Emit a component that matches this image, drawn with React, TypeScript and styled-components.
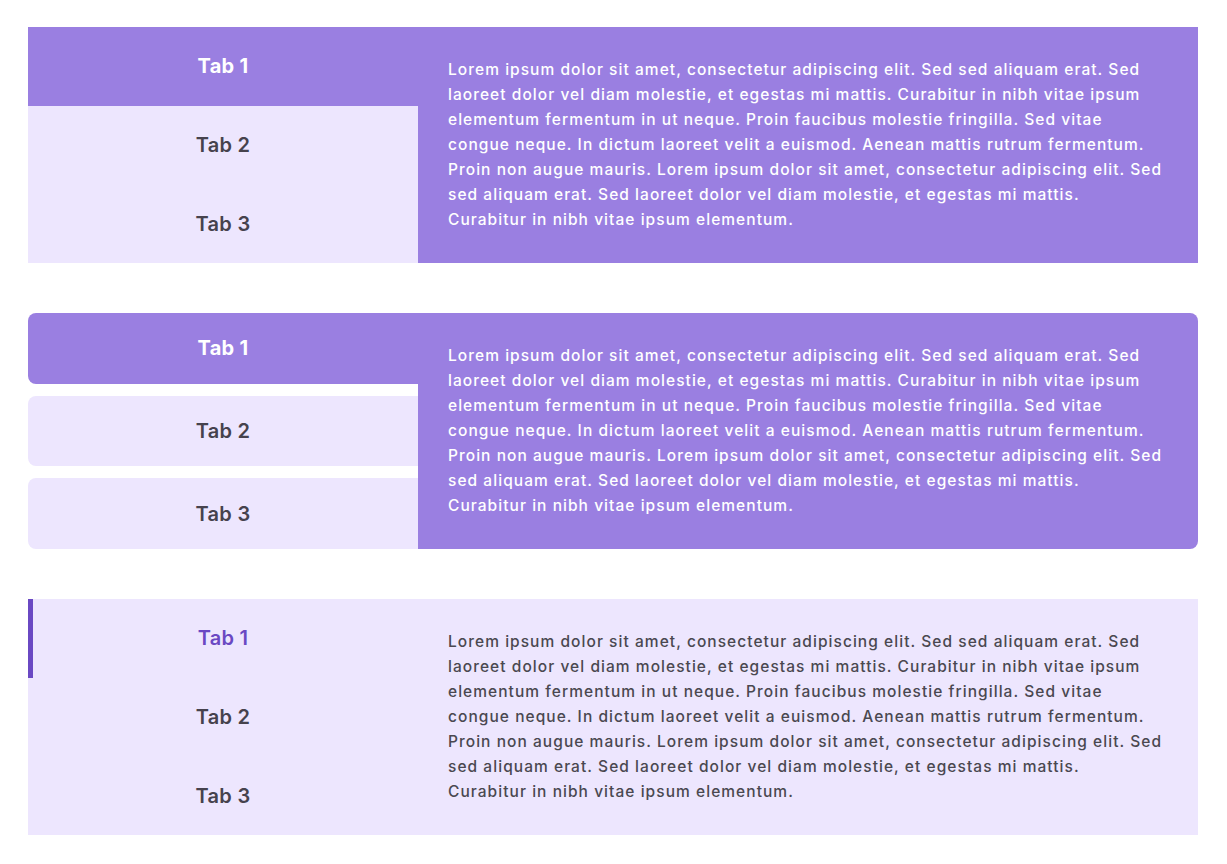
import React from "react";
import styled, { createGlobalStyle, css } from "styled-components";

const Global = createGlobalStyle`
  html, body { margin: 0; padding: 0; background: #ffffff; }
  body { font-family: Inter, "Noto Sans", sans-serif; }
  * { box-sizing: border-box; }
`;

const purple = "#9a7fe1";
const light = "#ede6fe";
const accent = "#6a48c3";

type Variant = "flat" | "rounded" | "line";

const Page = styled.div`
  width: 1170px;
  margin: 27px 0 0 28px;
  display: flex;
  flex-direction: column;
  gap: 50px;
`;

const TabsBox = styled.div<{ $v: Variant }>`
  display: grid;
  grid-template-columns: 390px 1fr;
  ${(p) => p.$v === "line" && css`background: ${light};`}
`;

const TabList = styled.div<{ $v: Variant }>`
  display: flex;
  flex-direction: column;
  gap: ${(p) => (p.$v === "rounded" ? "12px" : "0")};
`;

const Tab = styled.button<{ $v: Variant; $active: boolean }>`
  flex: 1;
  border: none;
  margin: 0;
  padding: 0;
  position: relative;
  font-family: Inter, "Noto Sans", sans-serif;
  font-size: 20px;
  letter-spacing: 0.3px;
  font-weight: 600;
  color: #46424d;
  background: ${light};
  cursor: pointer;
  ${(p) =>
    p.$v === "flat" &&
    p.$active &&
    css`
      background: ${purple};
      color: #ffffff;
      font-weight: 700;
    `}
  ${(p) =>
    p.$v === "rounded" &&
    css`
      border-radius: 8px 0 0 8px;
      ${p.$active && css`background: ${purple}; color: #ffffff; font-weight: 700;`}
    `}
  ${(p) =>
    p.$v === "line" &&
    css`
      background: transparent;
      ${p.$active &&
      css`
        color: ${accent};
        &::before {
          content: "";
          position: absolute;
          left: 0;
          top: 0;
          bottom: 0;
          width: 5px;
          background: ${accent};
        }
      `}
    `}
`;

const Panel = styled.div<{ $v: Variant }>`
  padding: 30px 35px 31px 30px;
  font-size: 15.5px;
  line-height: 25px;
  letter-spacing: 1.05px;
  font-weight: 500;
  color: #ffffff;
  background: ${purple};
  ${(p) => p.$v === "rounded" && css`border-radius: 0 8px 8px 0;`}
  ${(p) =>
    p.$v === "line" &&
    css`
      background: transparent;
      color: #4a4850;
    `}
`;

const Text = styled.p`
  margin: 0;
`;

const LOREM =
  "Lorem ipsum dolor sit amet, consectetur adipiscing elit. Sed sed aliquam erat. Sed laoreet dolor vel diam molestie, et egestas mi mattis. Curabitur in nibh vitae ipsum elementum fermentum in ut neque. Proin faucibus molestie fringilla. Sed vitae congue neque. In dictum laoreet velit a euismod. Aenean mattis rutrum fermentum. Proin non augue mauris. Lorem ipsum dolor sit amet, consectetur adipiscing elit. Sed sed aliquam erat. Sed laoreet dolor vel diam molestie, et egestas mi mattis. Curabitur in nibh vitae ipsum elementum.";

function Tabs({ v }: { v: Variant }) {
  return (
    <TabsBox $v={v}>
      <TabList $v={v}>
        {["Tab 1", "Tab 2", "Tab 3"].map((t, i) => (
          <Tab key={t} $v={v} $active={i === 0}>
            {t}
          </Tab>
        ))}
      </TabList>
      <Panel $v={v}>
        <Text>{LOREM}</Text>
      </Panel>
    </TabsBox>
  );
}

export default function App() {
  return (
    <>
      <Global />
      <Page>
        <Tabs v="flat" />
        <Tabs v="rounded" />
        <Tabs v="line" />
      </Page>
    </>
  );
}
